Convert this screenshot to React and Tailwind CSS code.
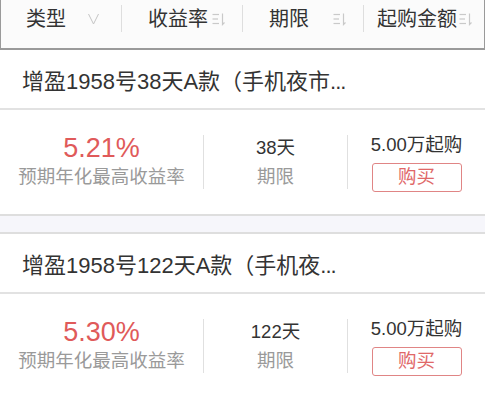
import React from "react";

const FONT = { fontFamily: '"Liberation Sans", "Noto Sans CJK SC", sans-serif' };

const products = [
  { name: "增盈1958号38天A款（手机夜市", rate: "5.21%", term: "38天", min: "5.00万起购" },
  { name: "增盈1958号122天A款（手机夜", rate: "5.30%", term: "122天", min: "5.00万起购" },
];

// sort icon: three bars + down arrow
const SortIcon = () => (
  <svg width="14" height="14" viewBox="0 0 14 14" fill="none" stroke="#c9c9c9" strokeWidth="1.2">
    <path d="M0.5 2.5H7" />
    <path d="M0.5 7H6" />
    <path d="M0.5 11.5H7" />
    <path d="M10.5 1.5V12.5L12.5 10.5" />
  </svg>
);

const Chevron = () => (
  <svg width="11" height="12" viewBox="0 0 11 12" fill="none" stroke="#c4c4c4" strokeWidth="1">
    <path d="M0.5 1L5.5 11L10.5 1" />
  </svg>
);

const Divider = () => <div className="w-px h-[27px] bg-[#dedede]" />;

const FilterBar = () => (
  <div className="h-[50px] bg-[#fbfbfb] border-x border-b-2 border-[#9a9a9a]">
    <div className="flex items-center h-[37px] text-[20px] text-[#333]">
      <div className="w-[120px] flex items-center pl-[25px]">
        <span>类型</span>
        <span className="ml-[22px] flex"><Chevron /></span>
      </div>
      <Divider />
      <div className="w-[120px] flex items-center pl-[26px]">
        <span>收益率</span>
        <span className="ml-[4px] flex"><SortIcon /></span>
      </div>
      <Divider />
      <div className="w-[120px] flex items-center pl-[26px]">
        <span>期限</span>
        <span className="ml-[24px] flex"><SortIcon /></span>
      </div>
      <Divider />
      <div className="flex-1 flex items-center pl-[13px]">
        <span>起购金额</span>
        <span className="ml-[2px] flex"><SortIcon /></span>
      </div>
    </div>
  </div>
);

const ProductCard = ({ p }) => (
  <div className="bg-white">
    <div className="h-[60px] flex items-center pl-[22px] pt-[4px] text-[22px] text-[#333] border-b-2 border-[#e2e2e2] whitespace-nowrap">
      {p.name}
      <span className="tracking-[-1px]">...</span>
    </div>
    <div className="h-[104px] flex items-center">
      <div className="w-[203px] flex flex-col items-center justify-center">
        <div className="text-[27px] leading-[30px] text-[#e05a5a]">{p.rate}</div>
        <div className="text-[18.5px] leading-[28px] text-[#9a9a9a]">预期年化最高收益率</div>
      </div>
      <div className="w-px h-[54px] bg-[#e0e0e0]" />
      <div className="w-[143px] flex flex-col items-center justify-center">
        <div className="text-[18.5px] leading-[30px] text-[#333]">{p.term}</div>
        <div className="text-[18.5px] leading-[28px] text-[#9a9a9a]">期限</div>
      </div>
      <div className="w-px h-[54px] bg-[#e0e0e0]" />
      <div className="flex-1 flex flex-col items-center justify-center">
        <div className="text-[18.5px] leading-[26px] text-[#333]">{p.min}</div>
        <button className="mt-[5px] w-[90px] h-[29px] border border-[#e08585] rounded-[3px] text-[18.5px] text-[#e06868] leading-none">
          购买
        </button>
      </div>
    </div>
  </div>
);

export default function App() {
  return (
    <div className="w-[485px] h-[400px] overflow-hidden bg-white" style={FONT}>
      <FilterBar />
      <ProductCard p={products[0]} />
      <div className="h-[20px] bg-[#f6f6fb] border-y-2 border-[#dedede]" />
      <ProductCard p={products[1]} />
    </div>
  );
}
